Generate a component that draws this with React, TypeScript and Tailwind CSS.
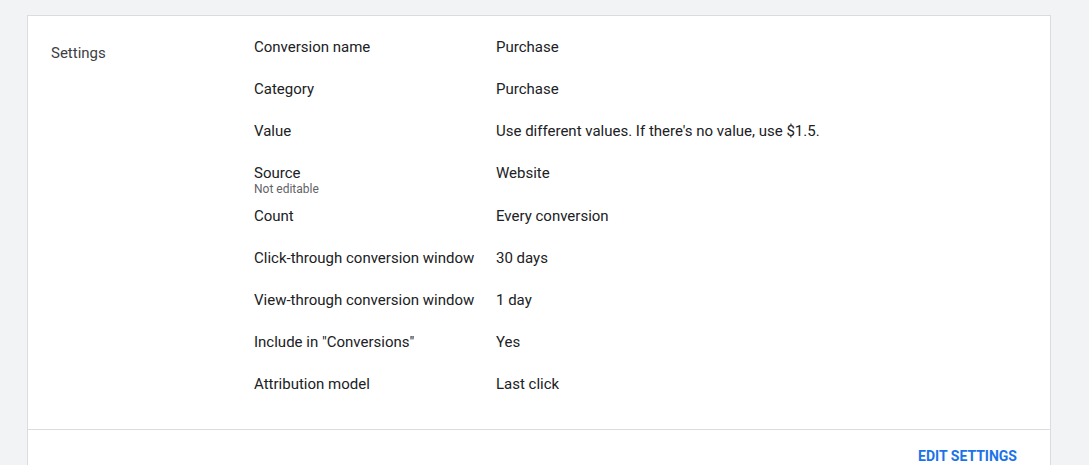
const rows: { label: string; value: string; note?: string }[] = [
  { label: "Conversion name", value: "Purchase" },
  { label: "Category", value: "Purchase" },
  { label: "Value", value: "Use different values. If there's no value, use $1.5." },
  { label: "Source", value: "Website", note: "Not editable" },
  { label: "Count", value: "Every conversion" },
  { label: "Click-through conversion window", value: "30 days" },
  { label: "View-through conversion window", value: "1 day" },
  { label: "Include in \"Conversions\"", value: "Yes" },
  { label: "Attribution model", value: "Last click" },
];

export default function App() {
  return (
    <div className="h-[465px] overflow-hidden bg-[#f1f3f4] pl-[27px] pr-[38px] pt-[15px] font-['Roboto',sans-serif]">
      <div className="border border-b-0 border-[#dadce0] bg-white">
        <div className="flex pb-[24px] pl-[23px] pt-[10px]">
          <div className="mt-[17px] w-[203px] shrink-0 text-[15px] leading-5 text-[#3c4043]">Settings</div>
          <div className="flex-1">
            {rows.map((r) => (
              <div key={r.label} className={`flex text-[15px] leading-5 text-[#202124] ${r.note ? "pt-[11px]" : "py-[11px]"}`}>
                <div className="w-[242px] shrink-0">
                  <div>{r.label}</div>
                  {r.note && <div className="text-xs leading-[12px] text-[#5f6368]">{r.note}</div>}
                </div>
                <div>{r.value}</div>
              </div>
            ))}
          </div>
        </div>
        <div className="flex h-[60px] justify-end border-t border-[#dadce0] pr-[25px] pt-[16px]">
          <button className="h-5 px-2 text-sm font-bold uppercase leading-5 text-[#1a73e8]">
            Edit settings
          </button>
        </div>
      </div>
    </div>
  );
}
